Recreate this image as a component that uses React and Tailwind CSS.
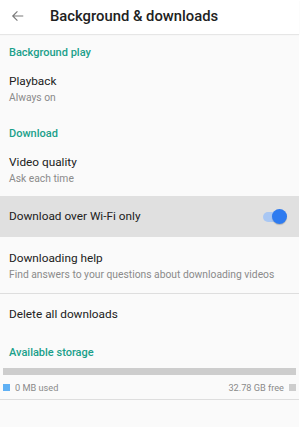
import React from 'react';

const Label = ({ children, className = '' }) => (
  <div className={`px-[9px] text-[11px] leading-[14px] font-medium text-[#1aa08a] ${className}`}>{children}</div>
);

const Item = ({ title, sub, className = '' }) => (
  <div className={`px-[9px] ${className}`}>
    <div className="text-[11.8px] leading-[16px] text-[#212121]">{title}</div>
    {sub && <div className="mt-[2px] text-[10.3px] leading-[13px] text-[#8a8a8a]">{sub}</div>}
  </div>
);

export default function App() {
  return (
    <div className="w-[306px] h-[427px] bg-white overflow-hidden" style={{ fontFamily: 'Roboto, "Liberation Sans", sans-serif' }}>
      <div className="w-[299px] h-full bg-[#fafafa] flex flex-col">
        <header className="h-[34px] shrink-0 bg-white flex items-center shadow-[0_1px_1px_rgba(0,0,0,0.08)]">
          <svg className="ml-[11px] mt-[-2px]" width="14" height="14" viewBox="0 0 24 24" fill="none" stroke="#7a7a7a" strokeWidth="2">
            <path d="M21 12H4M11 4l-8 8 8 8" />
          </svg>
          <h1 className="ml-[25px] mt-[-2px] text-[14.8px] font-medium text-[#212121]">Background &amp; downloads</h1>
        </header>

        <Label className="mt-[12px]">Background play</Label>
        <Item className="mt-[13px]" title="Playback" sub="Always on" />

        <Label className="mt-[23px]">Download</Label>
        <Item className="mt-[13px]" title="Video quality" sub="Ask each time" />

        <div className="mt-[11px] h-[41px] bg-[#e0e0e0] flex items-center justify-between px-[9px]">
          <span className="text-[11.8px] text-[#212121]">Download over Wi-Fi only</span>
          <div className="relative w-[20px] h-[10px] mr-[7px] rounded-full bg-[#a9c7f3]">
            <div className="absolute right-[-4px] top-[-3px] w-[15px] h-[15px] rounded-full bg-[#2e7bf0] shadow-[0_1px_1px_rgba(0,0,0,0.2)]" />
          </div>
        </div>

        <Item className="mt-[13px]" title="Downloading help" sub="Find answers to your questions about downloading videos" />
        <div className="mt-[12px] h-px bg-[#dedede]" />

        <div className="mt-[12px] px-[9px] text-[11.8px] leading-[16px] text-[#212121]">Delete all downloads</div>

        <Label className="mt-[24px]">Available storage</Label>
        <div className="mt-[8px] mx-[3px] h-[7px] bg-[#cdcdcd]" />
        <div className="mt-[6px] px-[3px] flex items-center justify-between text-[9.2px] leading-[13px] text-[#8a8a8a]">
          <div className="flex items-center gap-[5px]">
            <span className="w-[7px] h-[7px] bg-[#5fb0f4]" />
            <span>0 MB used</span>
          </div>
          <div className="flex items-center gap-[5px]">
            <span>32.78 GB free</span>
            <span className="w-[7px] h-[7px] bg-[#cdcdcd]" />
          </div>
        </div>
        <div className="mt-[5px] h-px bg-[#dedede]" />
      </div>
    </div>
  );
}
